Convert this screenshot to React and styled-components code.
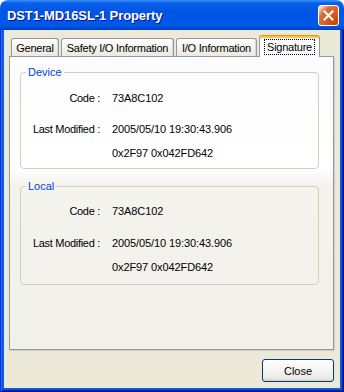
import React from 'react';
import styled, { createGlobalStyle } from 'styled-components';

const GlobalStyle = createGlobalStyle`
  html, body {
    margin: 0;
    padding: 0;
    background: #ffffff;
  }
  body {
    font-family: "Liberation Sans", Arial, sans-serif;
    font-size: 11px;
    color: #000;
  }
`;

const Window = styled.div`
  width: 344px;
  height: 392px;
  display: flex;
  flex-direction: column;
  border-radius: 8px 8px 0 0;
  overflow: hidden;
`;

const TitleBar = styled.div`
  height: 30px;
  flex: none;
  display: flex;
  align-items: center;
  padding: 0 5px 0 7px;
  box-sizing: border-box;
  background: linear-gradient(180deg, #3d95ff, #0a5fe8 10%, #0055e5 40%, #0058ea 85%, #0048d0 95%, #003dc0);
`;

const Title = styled.div`
  flex: 1;
  color: #fff;
  font-family: "Liberation Sans", Arial, sans-serif;
  font-weight: bold;
  font-size: 13px;
  letter-spacing: -0.1px;
  text-shadow: 1px 1px #0f1089;
  margin-top: 1px;
`;

const CloseBox = styled.div`
  width: 21px;
  height: 21px;
  box-sizing: border-box;
  border: 1px solid #fff;
  border-radius: 3px;
  display: grid;
  place-items: center;
  background: radial-gradient(circle at 90% 90%, #cc4600 0, #dc6527 55%, #cd7546 70%, #ffccb2 90%, #fff 100%);
`;

const Frame = styled.div`
  flex: 1;
  display: flex;
  padding: 0 4px 4px;
  background: #0a5ae8;
  box-shadow: inset 1px 0 #0831d9, inset -1px 0 #00138c, inset 0 -1px #00138c, inset 2px 0 #166aee, inset -2px 0 #001ea0, inset 0 -2px #001ea0;
`;

const Body = styled.div`
  flex: 1;
  display: flex;
  flex-direction: column;
  background: #ece9d8;
  padding: 5px 6px 6px 5px;
`;

const TabStrip = styled.div`
  display: flex;
  align-items: flex-end;
  height: 22px;
  padding-left: 2px;
  margin-bottom: -1px;
  position: relative;
  z-index: 1;
`;

const Tab = styled.div`
  width: ${p => p.$w}px;
  box-sizing: border-box;
  margin-right: 2px;
  display: flex;
  align-items: center;
  justify-content: center;
  letter-spacing: -0.25px;
  border: 1px solid #919b9c;
  border-bottom: none;
  border-radius: 3px 3px 0 0;
  height: ${p => (p.$active ? 22 : 18)}px;
  margin-bottom: ${p => (p.$active ? 0 : 1)}px;
  background: ${p => (p.$active ? '#fcfcfe' : 'linear-gradient(180deg, #ffffff, #f5f4ef 45%, #eae9e2)')};
  border-top: ${p => (p.$active ? '1px solid #e68b2c' : '1px solid #919b9c')};
  box-shadow: ${p => (p.$active ? 'inset 0 2px 0 #ffc83c' : 'inset -1px 0 #d8d8d0')};
  padding-top: ${p => (p.$active ? 1 : 0)}px;
`;

const Focus = styled.span`
  outline: 1px dotted #000;
  padding: 0 2px;
  line-height: 14px;
`;

const Panel = styled.div`
  flex: 1;
  border: 1px solid #919b9c;
  box-shadow: 1px 1px 0 #d0cec0;
  padding-left: 10px;
  background: linear-gradient(180deg, #fcfcfe 0%, #ffffff 38%, #f4f3ee 44%, #f1f0eb 100%);
`;

const Group = styled.fieldset`
  width: 299px;
  box-sizing: border-box;
  margin: ${p => p.$top}px 0 0 0;
  padding: ${p => p.$pt}px 0 ${p => p.$pb}px 0;
  border: 1px solid #d0d0bf;
  border-radius: 4px;
  min-width: 0;
`;

const Legend = styled.legend`
  color: #0046d5;
  padding: 0 2px;
  margin-left: 5px;
  line-height: 14px;
`;

const Row = styled.div`
  display: grid;
  grid-template-columns: 79px 1fr;
  column-gap: 12px;
  line-height: 14px;
  margin-top: ${p => p.$mt || 0}px;
`;

const Label = styled.span`
  text-align: right;
  white-space: nowrap;
  letter-spacing: -0.3px;
`;

const Value = styled.span`
  white-space: nowrap;
  letter-spacing: -0.1px;
`;

const Footer = styled.div`
  display: flex;
  justify-content: flex-end;
  margin-top: 9px;
`;

const Button = styled.button`
  width: 72px;
  height: 23px;
  border: 1px solid #003c74;
  border-radius: 3px;
  background: linear-gradient(180deg, #ffffff, #ecebe6 86%, #d6d0c5);
  font-family: "Liberation Sans", Arial, sans-serif;
  font-size: 11px;
  color: #000;
  padding: 0;
`;

const tabs = [
  { name: 'General', w: 48 },
  { name: 'Safety I/O Information', w: 113 },
  { name: 'I/O Information', w: 81 },
  { name: 'Signature', w: 61, active: true },
];

const InfoGroup = ({ title, top, pt, pb, gaps }) => (
  <Group $top={top} $pt={pt} $pb={pb}>
    <Legend>{title}</Legend>
    <Row>
      <Label>Code :</Label>
      <Value>73A8C102</Value>
    </Row>
    <Row $mt={gaps[0]}>
      <Label>Last Modified :</Label>
      <Value>2005/05/10 19:30:43.906</Value>
    </Row>
    <Row $mt={gaps[1]}>
      <Label />
      <Value>0x2F97 0x042FD642</Value>
    </Row>
  </Group>
);

const App = () => {
  return (
    <>
      <GlobalStyle />
      <Window>
        <TitleBar>
          <Title>DST1-MD16SL-1 Property</Title>
          <CloseBox>
            <svg width="11" height="11" viewBox="0 0 11 11">
              <path d="M1.5 1.5 L9.5 9.5 M9.5 1.5 L1.5 9.5" stroke="#fff" strokeWidth="2" strokeLinecap="square" />
            </svg>
          </CloseBox>
        </TitleBar>
        <Frame>
          <Body>
            <TabStrip>
              {tabs.map(t => (
                <Tab key={t.name} $w={t.w} $active={t.active}>
                  {t.active ? <Focus>{t.name}</Focus> : t.name}
                </Tab>
              ))}
            </TabStrip>
            <Panel>
              <InfoGroup title="Device" top={8} pt={12} pb={8} gaps={[17, 10]} />
              <InfoGroup title="Local" top={10} pt={11} pb={10} gaps={[18, 10]} />
            </Panel>
            <Footer>
              <Button>Close</Button>
            </Footer>
          </Body>
        </Frame>
      </Window>
    </>
  );
};

export default App;
